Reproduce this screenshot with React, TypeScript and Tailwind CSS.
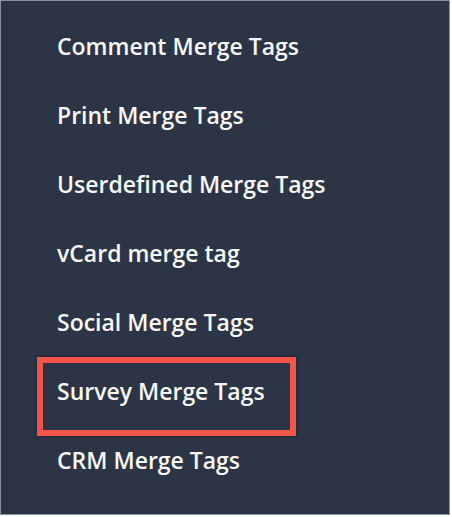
const ITEMS = [
  "Comment Merge Tags",
  "Print Merge Tags",
  "Userdefined Merge Tags",
  "vCard merge tag",
  "Social Merge Tags",
  "Survey Merge Tags",
  "CRM Merge Tags",
];

export default function App() {
  return (
    <div className="w-[452px] h-[517px] bg-white">
      <div
        className="relative w-[450px] h-[515px] bg-[#2c3545] border border-[#8d9096] pt-[11px] pl-[56px]"
        style={{ fontFamily: '"Open Sans", "Noto Sans", sans-serif' }}
      >
        <ul className="flex flex-col">
          {ITEMS.map((item) => (
            <li key={item} className="h-[69px] flex items-center text-[23px] font-[560] text-[#f7f7f7]">
              {item}
            </li>
          ))}
        </ul>
        {/* highlight annotation */}
        <div className="absolute left-[36px] top-[356px] w-[259px] h-[79px] border-[6px] border-[#f2564a] shadow-[0_0_3px_rgba(0,0,0,0.5)]" />
      </div>
    </div>
  );
}
